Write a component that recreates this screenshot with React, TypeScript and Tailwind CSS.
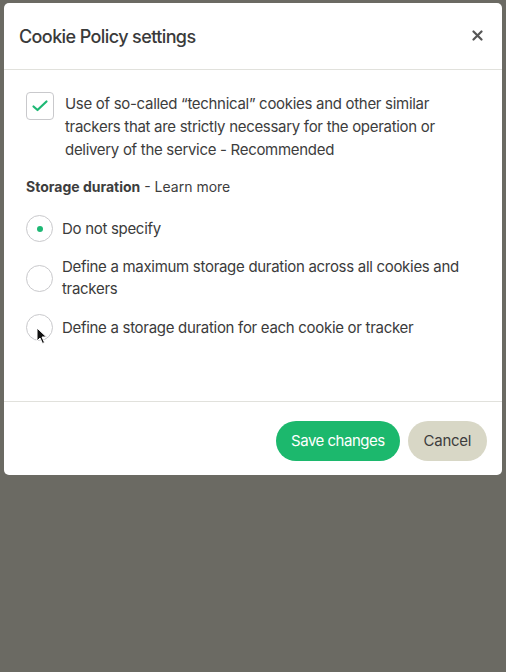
import React from "react";

export default function App() {
  const font = { fontFamily: "Inter, 'Noto Sans', sans-serif" };
  return (
    <div className="w-[506px] h-[672px] bg-[#6b6a63] pt-[3px] pl-[4px] relative" style={font}>
      <div className="w-[498px] bg-white rounded-[5px] text-[#3b3b3b]">
        <div className="h-[67px] flex items-center justify-between pl-[15px] pr-[19px] border-b border-[#e1e1dc]">
          <div className="text-[18px] font-medium tracking-[-0.6px] text-[#3a3a3a]">Cookie Policy settings</div>
          <svg width="11" height="11" viewBox="0 0 11 11" className="mb-[2px]">
            <path d="M1.5 1.5 L9.5 9.5 M9.5 1.5 L1.5 9.5" stroke="#555" strokeWidth="2.2" strokeLinecap="round" />
          </svg>
        </div>
        <div className="pl-[22px] pr-[20px] pt-[22px] pb-[24px] border-b border-[#e1e1dc]">
          <div className="flex items-start gap-[11px]">
            <div className="w-[28px] h-[28px] shrink-0 rounded-[4px] border border-[#c9c9cc] flex items-center justify-center">
              <svg width="18" height="14" viewBox="0 0 18 14">
                <path d="M2.5 7.5 L6.5 11 L15.5 2.5" fill="none" stroke="#1db874" strokeWidth="2.2" strokeLinecap="round" strokeLinejoin="round" />
              </svg>
            </div>
            <p className="text-[15px] leading-[23px] tracking-[-0.3px] text-[#3d3d3d]">
              Use of so-called “technical” cookies and other similar trackers that are strictly necessary for the operation or delivery of the service - Recommended
            </p>
          </div>
          <div className="mt-[15px] text-[14px] leading-[22px] text-[#3d3d3d]">
            <span className="font-bold">Storage duration</span> - Learn more
          </div>
          <div className="mt-[17px] flex flex-col gap-[14px] tracking-[-0.3px]">
            <div className="flex items-center gap-[9px]">
              <div className="w-[27px] h-[27px] shrink-0 rounded-full border border-[#c9c9cc] flex items-center justify-center">
                <div className="w-[6px] h-[6px] rounded-full bg-[#1db874]" />
              </div>
              <span className="text-[15px] leading-[22px]">Do not specify</span>
            </div>
            <div className="flex items-center gap-[9px]">
              <div className="w-[27px] h-[27px] shrink-0 rounded-full border border-[#c9c9cc]" />
              <span className="text-[15px] leading-[22px]">Define a maximum storage duration across all cookies and trackers</span>
            </div>
            <div className="flex items-center gap-[9px]">
              <div className="w-[27px] h-[27px] shrink-0 rounded-full border border-[#c9c9cc]" />
              <span className="text-[15px] leading-[22px]">Define a storage duration for each cookie or tracker</span>
            </div>
          </div>
          <div className="h-[36px]" />
        </div>
        <div className="flex justify-end gap-[8px] pt-[19px] pb-[14px] pr-[15px] tracking-[-0.3px]">
          <button className="h-[40px] px-[15px] rounded-full bg-[#1cb86d] text-white text-[15px] tracking-[-0.5px]">Save changes</button>
          <button className="h-[40px] px-[16px] rounded-full bg-[#d8d7c6] text-[#3d3d3d] text-[15px]">Cancel</button>
        </div>
      </div>
      <svg className="absolute left-[36px] top-[327px]" width="12" height="18" viewBox="0 0 12 18">
        <path d="M1 1 L1 14 L4 11 L6.5 16.5 L8.5 15.5 L6 10 L10.5 10 Z" fill="#111" stroke="#fff" strokeWidth="1" />
      </svg>
    </div>
  );
}
